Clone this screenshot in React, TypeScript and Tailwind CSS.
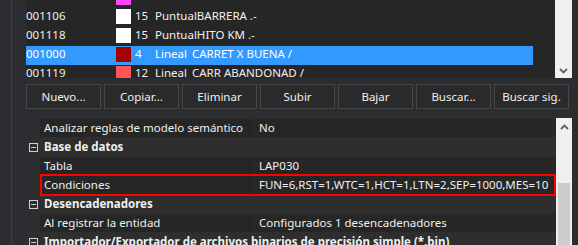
import React from 'react'

const font = "font-['Noto_Sans',sans-serif]"

type Row = { code: string; color: string; num: string; type: string; desc: string; selected?: boolean }

// first entry is scrolled mostly out of view: only its colour swatch shows
const rows: Row[] = [
  { code: '', color: '#ff44ff', num: '', type: '', desc: '' },
  { code: '001106', color: '#ffffff', num: '15', type: 'Puntual', desc: 'BARRERA .-' },
  { code: '001118', color: '#ffffff', num: '15', type: 'Puntual', desc: 'HITO KM .-' },
  { code: '001000', color: '#a50000', num: '4', type: 'Lineal', desc: 'CARRET X BUENA /', selected: true },
  { code: '001119', color: '#ff5555', num: '12', type: 'Lineal', desc: 'CARR ABANDONAD /' },
]

const buttons = ['Nuevo...', 'Copiar...', 'Eliminar', 'Subir', 'Bajar', 'Buscar...', 'Buscar sig.']

function Chevron({ up }: { up?: boolean }) {
  return (
    <svg width="9" height="6" viewBox="0 0 9 6" className="block">
      <polyline
        points={up ? '1,5 4.5,1.5 8,5' : '1,1 4.5,4.5 8,1'}
        fill="none"
        stroke="#606060"
        strokeWidth="1.8"
      />
    </svg>
  )
}

function Collapse() {
  return (
    <div className="flex h-[9px] w-[9px] items-center justify-center border border-[#cfcfcf]">
      <div className="h-px w-[5px] bg-[#cfcfcf]" />
    </div>
  )
}

function Category({ label }: { label: string }) {
  return (
    <div className="flex h-[18px] items-center whitespace-nowrap">
      <div className="flex w-[14px] justify-center pl-px">
        <Collapse />
      </div>
      <span className="pl-[4px] font-bold text-[#f0f0f0]">{label}</span>
    </div>
  )
}

function Prop({ name, value, marked }: { name: string; value: string; marked?: boolean }) {
  return (
    <div className="flex h-[18px]">
      <div className="w-[14px]" />
      <div className="relative flex flex-1 gap-px">
        <div className="flex w-[214px] items-center bg-[#262626] pl-[4px] text-[#f0f0f0]">{name}</div>
        <div className="flex flex-1 items-center overflow-hidden whitespace-nowrap bg-[#262626] pl-[4px] text-[#f0f0f0]">
          {value}
        </div>
        {marked && <div className="absolute -top-[2px] -bottom-[2px] left-0 right-0 border-2 border-[#ff0000]" />}
      </div>
    </div>
  )
}

export default function App() {
  return (
    <div className={`${font} flex h-[245px] w-[578px] overflow-hidden bg-[#2b2d30] text-[11.5px]`}>
      {/* left frame */}
      <div className="w-[11px]" />
      <div className="w-px bg-[#3d3f43]" />
      <div className="w-[14px]" />

      <div className="flex w-[546px] flex-col">
        {/* --- list --- */}
        <div className="flex h-[78px]">
          <div className="w-[529px] overflow-hidden bg-[#262626]">
            <div className="-mt-[11px]">
              {rows.map((r, i) => (
                <div
                  key={i}
                  className={`flex h-[19px] w-[507px] whitespace-nowrap leading-[14px] ${
                    r.selected ? 'bg-[#3399ff] text-white' : 'text-[#f0f0f0]'
                  }`}
                >
                  <div className="w-[90px] pt-px">{r.code}</div>
                  <div className="mt-px h-[15px] w-[15px]" style={{ backgroundColor: r.color }} />
                  <div className="w-[4px]" />
                  <div className="w-[20px] pt-px">{r.num}</div>
                  <div className="min-w-[37px] pt-px">{r.type}</div>
                  <div className="pt-px">{r.desc}</div>
                </div>
              ))}
            </div>
          </div>
          <div className="flex w-[17px] flex-col items-center justify-end bg-[#f0f0f0] pb-[4px]">
            <Chevron />
          </div>
        </div>

        {/* --- buttons --- */}
        <div className="mt-[6px] flex gap-[3px]">
          {buttons.map((b) => (
            <div
              key={b}
              className="flex h-[25px] w-[75px] items-center justify-center border border-[#45474b] bg-[#2a2a2a] text-[#f0f0f0]"
            >
              {b}
            </div>
          ))}
        </div>

        {/* --- property grid --- */}
        <div className="mt-[9px] flex flex-1">
          <div className="flex w-[530px] flex-col gap-px bg-[#2e2e2e] pt-px">
            <Prop name="Analizar reglas de modelo semántico" value="No" />
            <Category label="Base de datos" />
            <Prop name="Tabla" value="LAP030" />
            <Prop name="Condiciones" value="FUN=6,RST=1,WTC=1,HCT=1,LTN=2,SEP=1000,MES=10" marked />
            <Category label="Desencadenadores" />
            <Prop name="Al registrar la entidad" value="Configurados 1 desencadenadores" />
            <Category label="Importador/Exportador de archivos binarios de precisión simple (*.bin)" />
          </div>
          <div className="flex w-[16px] flex-col bg-[#f0f0f0]">
            <div className="flex h-[17px] items-center justify-center">
              <Chevron up />
            </div>
            <div className="mx-[2px] mt-[48px] flex-1 bg-[#cdcdcd]" />
          </div>
        </div>
      </div>
    </div>
  )
}
